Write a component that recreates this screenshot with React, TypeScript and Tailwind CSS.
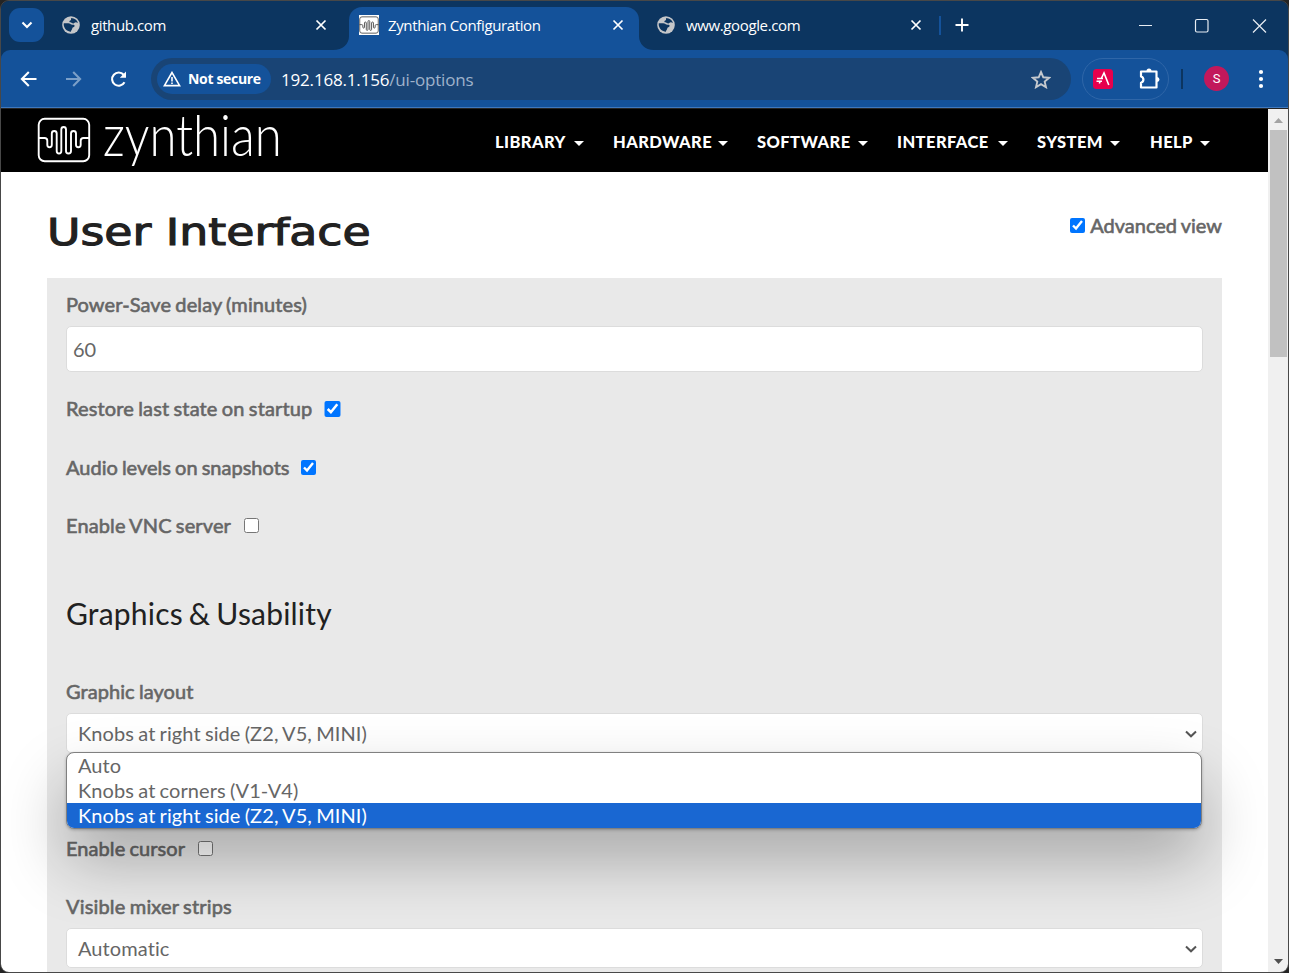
import React from "react";

function Globe() {
  return (
    <svg width="18" height="18" viewBox="0 0 18 18" className="shrink-0">
      <circle cx="9" cy="9" r="8.8" fill="#c4c6c9" />
      <path d="M1.8 7.3h4.600c1.600 0 2 1 3 1.300 1.200.4 2.300-.2 3 .7.6.8-.2 1.700-1.100 2-.9.3-1 .9-1.200 1.800-.3 1.100-1.100 1.200-1.100 2.600-3.900-.2-6.800-3-7.300-6.700z" fill="#0c3560" />
      <path d="M9.200 2c-.4 1 .2 1.500-.5 2.200-.5.6-1.300.5-1.300 1.300 0 .7.7.8 1.500.9 1 .1 1.100 1 2.300 1 1.300 0 1.500-1.200 2.500-1.200.9 0 1.700.5 2.300 1.100C15.200 4.100 12.700 2 9.200 2z" fill="#0c3560" />
    </svg>
  );
}

function Cross() {
  return (
    <svg width="12" height="12" viewBox="0 0 12 12" stroke="#fff" strokeWidth="1.7" className="shrink-0">
      <path d="M1.500 1.500l9 9M10.500 1.500l-9 9" />
    </svg>
  );
}

const WAVE =
  "M1 21h6.500q2.800 0 2.800 2.800v4a2.250 2.500 0 0 0 4.500 0V16.500a2.450 2.500 0 0 1 4.900 0V34a2.300 2.500 0 0 0 4.600 0V12.500a2.350 2.500 0 0 1 4.700 0V34a2.500 2.500 0 0 0 5 0V16.500a2.500 2.500 0 0 1 5 0v11.300a2.350 2.500 0 0 0 4.700 0v-4q0-2.800 2.800-2.800H53";

function Favicon() {
  return (
    <svg width="20" height="20" viewBox="0 0 54 54" className="shrink-0">
      <rect width="54" height="54" fill="#fff" />
      <rect x="2" y="5" width="50" height="44" rx="6" fill="none" stroke="#555" strokeWidth="2.500" />
      <path d={WAVE} transform="translate(0 5)" fill="none" stroke="#555" strokeWidth="2.600" />
    </svg>
  );
}

function TabStrip() {
  return (
    <div className="flex h-[49px] items-stretch bg-[#0c3560] text-[15px] text-white">
      <div className="ml-2 mt-[7px] flex h-[34px] w-[35px] items-center justify-center rounded-[11px] bg-[#14529a]">
        <svg width="12" height="8" viewBox="0 0 12 8" fill="none" stroke="#fff" strokeWidth="2.100"><path d="M1.500 1.500L6 6l4.500-4.500" /></svg>
      </div>
      <div className="ml-[18px] flex h-[48px] w-[265px] items-center">
        <Globe />
        <span className="ml-[11px] flex-1 tracking-[-0.4px]">github.com</span>
        <Cross />
      </div>
      <svg width="21" height="49" viewBox="0 0 21 49" className="ml-px shrink-0"><path d="M5 49C15 49 21 43 21 35V49z" fill="#14529a" /></svg>
      <div className="mt-[6px] flex h-[43px] w-[290px] items-start rounded-t-[13px] bg-[#14529a] pl-[10px] pr-[15px]">
        <div className="flex h-[36px] flex-1 items-center">
          <Favicon />
          <span className="ml-[9px] flex-1 whitespace-nowrap tracking-[-0.37px]">Zynthian Configuration</span>
          <Cross />
        </div>
      </div>
      <svg width="18" height="49" viewBox="0 0 18 49" className="shrink-0"><path d="M0 49V35c0 8 6 14 15 14z" fill="#14529a" /></svg>
      <div className="flex h-[48px] w-[265px] items-center">
        <Globe />
        <span className="ml-[11px] flex-1 tracking-[-0.37px]">www.google.com</span>
        <Cross />
      </div>
      <div className="ml-[17px] mt-[15px] h-[19px] w-[2px] bg-[#14529a]" />
      <svg width="14" height="14" viewBox="0 0 14 14" stroke="#fff" strokeWidth="1.900" className="ml-[13.500px] mt-[17px] shrink-0"><path d="M7 .5v13M.5 7h13" /></svg>
      <div className="flex-1" />
      <svg width="130" height="16" viewBox="0 0 130 16" fill="none" stroke="#e8edf3" strokeWidth="1.200" className="mr-[20px] mt-[17px] shrink-0">
        <path d="M1 7.500h13M115 1.500l13 13M128 1.500l-13 13" />
        <rect x="57.500" y="1.500" width="12.500" height="12.500" rx="1.500" />
      </svg>
    </div>
  );
}

function Toolbar() {
  return (
    <div className="bg-[#0c3560]">
      <div className="flex h-[58px] items-center rounded-t-[9px] bg-[#14529a] text-white">
        <svg width="110" height="18" viewBox="0 0 110 18" fill="none" strokeWidth="2.100" className="ml-[18px] shrink-0">
          <path d="M17.500 9H3.500M9.800 2L2.900 9l6.900 7" stroke="#fff" />
          <path d="M47 9h14M54.200 2l6.900 7-6.900 7" stroke="#7b9fc8" />
          <path d="M105.500 12.300a6.600 6.600 0 1 1-.8-7.500" stroke="#fff" />
          <path d="M107 1.500v6.300h-6.200z" fill="#fff" />
        </svg>
        <div className="ml-[22px] flex h-[42px] w-[920px] items-center rounded-full bg-[#194475] pl-[6px] pr-[20px]">
          <div className="flex h-[30px] w-[114px] items-center rounded-full bg-[#14529a] pl-[6px]">
            <svg width="18" height="16" viewBox="0 0 18 16" fill="none" stroke="#fff" strokeWidth="1.600"><path d="M9 1.500L1.400 14.600h15.200zM9 6v4.500M9 11.500v1.600" /></svg>
            <span className="mb-[2px] ml-[7px] whitespace-nowrap text-[14px] font-bold tracking-[-0.32px]">Not secure</span>
          </div>
          <span className="ml-[10px] mt-px text-[17px] tracking-[-0.18px]">192.168.1.156<span className="text-[#9fb2ca]">/ui-options</span></span>
          <div className="flex-1" />
          <svg width="20" height="19" viewBox="0 0 20 19" fill="none" stroke="#c5c9ce" strokeWidth="1.900"><path d="M10 2l2.300 5.300 5.800.5-4.400 3.800 1.300 5.600-5-3-5 3 1.300-5.600L1.900 7.800l5.800-.5z" /></svg>
        </div>
        <div className="ml-[11px] flex h-[42px] w-[87px] items-center rounded-full border border-[#2f66a8] pl-[10px]">
          <svg width="20" height="20" viewBox="0 0 20 20" fill="none" stroke="#fff" strokeWidth="1.600">
            <rect width="20" height="20" rx="3.500" fill="#e6004c" stroke="none" />
            <path d="M6.300 14.500l1.200-3M8.500 9l2.500-5L15.800 16M4 9.500h6M3.500 12.300h5.500" />
          </svg>
          <svg width="22" height="22" viewBox="0 0 22 22" fill="none" stroke="#fff" strokeWidth="2.200" strokeLinejoin="round" className="ml-[26px]">
            <path d="M2 3.500h15.500v16H2v-4.800a3.200 3.200 0 0 0 0-6.200z" />
            <path d="M7.500 3a2.500 2.500 0 0 1 5 0zM18 9a2.500 2.500 0 0 1 0 5z" fill="#fff" stroke="none" />
          </svg>
        </div>
        <div className="ml-[12px] h-[20px] w-[2px] bg-[#0c3560]" />
        <div className="mb-px ml-[21px] flex h-[25px] w-[25px] items-center justify-center rounded-full bg-[#c2185b] font-[Roboto] text-[13px]">S</div>
        <svg width="6" height="20" viewBox="0 0 6 20" fill="#fff" className="ml-[29px]"><circle cx="3" cy="3" r="2.100" /><circle cx="3" cy="10" r="2.100" /><circle cx="3" cy="17" r="2.100" /></svg>
      </div>
    </div>
  );
}

function NavItem({ label, width }: { label: string; width: string }) {
  return (
    <div className={`flex items-center justify-between ${width}`}>
      <span className="whitespace-nowrap">{label}</span>
      <svg width="10" height="5" viewBox="0 0 10 5" className="mt-[3px]"><path d="M0 0h10L5 5z" fill="#fff" /></svg>
    </div>
  );
}

function SiteNav() {
  return (
    <nav className="flex h-[63px] shrink-0 items-center bg-black pl-[36px] pr-[58px] font-[Lato] text-white">
      <svg width="54" height="46" viewBox="0 0 54 46" fill="none" stroke="#fff" strokeWidth="1.900" className="mb-px shrink-0">
        <rect x="1.700" y="1.800" width="50.500" height="42.500" rx="6" />
        <path d={WAVE} />
      </svg>
      <div className="mb-[13px] ml-[12px] origin-left scale-x-[0.848] whitespace-nowrap text-[58px] font-light leading-[74px]">zynthian</div>
      <div className="flex-1" />
      <div className="mt-[3px] flex gap-[29px] text-[16.500px] font-black tracking-[0.42px]">
        <NavItem label="LIBRARY" width="w-[89px]" />
        <NavItem label="HARDWARE" width="w-[115px]" />
        <NavItem label="SOFTWARE" width="w-[111px]" />
        <NavItem label="INTERFACE" width="w-[111px]" />
        <NavItem label="SYSTEM" width="w-[83px] mr-px" />
        <NavItem label="HELP" width="w-[60px]" />
      </div>
    </nav>
  );
}

const labelText = "whitespace-nowrap [word-spacing:-1px] [-webkit-text-stroke:0.6px_#666]";

function CheckRow({ label, checked, gap, box, tracking }: { label: string; checked?: boolean; gap: string; box: string; tracking: string }) {
  return (
    <label className={`flex h-[30px] items-center ${gap}`}>
      <span className={`${labelText} ${tracking}`}>{label}</span>
      <input type="checkbox" defaultChecked={checked} className={`m-0 ${box}`} />
    </label>
  );
}

function SelectBox({ value, children }: { value: string; children?: React.ReactNode }) {
  return (
    <div className="relative mt-[7px] flex h-[40px] items-center rounded-[5px] border border-[#dcdcdc] bg-white pl-[11px] pr-[5px] tracking-[0.085px] [word-spacing:-1px]">
      <span className="flex-1">{value}</span>
      <svg width="12" height="8" viewBox="0 0 12 8" fill="none" stroke="#555" strokeWidth="2" className="mt-px"><path d="M1 1.500L6 6.300l5-4.800" /></svg>
      {children}
    </div>
  );
}

function Page() {
  return (
    <main className="flex-1 bg-white px-[46px] font-[Lato] text-[20px] text-[#666]">
      <div className="flex h-[106px] justify-between">
        <h1 className="mt-[37px] w-[322px] origin-left scale-x-[1.204] whitespace-nowrap font-['DejaVu_Sans'] text-[38px] leading-[46px] text-[#212121] [-webkit-text-stroke:1.100px_#212121]">User Interface</h1>
        <label className="mt-[38px] flex h-[30px] items-center">
          <input type="checkbox" defaultChecked className="m-0 mr-[5px] h-[15px] w-[15px]" />
          <span className={labelText}>Advanced view</span>
        </label>
      </div>
      <section className="h-[700px] bg-[#e9e9e9] px-[19px] pt-[11px]">
        <div className={`h-[30px] leading-[30px] tracking-[0.1px] ${labelText}`}>Power-Save delay (minutes)</div>
        <div className="mt-[7px] flex h-[46px] items-center rounded-[5px] border border-[#dcdcdc] bg-white pl-[6px]">60</div>
        <CheckRow label="Restore last state on startup" checked gap="mt-[21px]" tracking="tracking-[0.14px]" box="ml-[12px] mt-px h-[16px] w-[17px]" />
        <CheckRow label="Audio levels on snapshots" checked gap="mt-[29px]" tracking="tracking-[0px]" box="ml-[12px] h-[15px] w-[15px]" />
        <CheckRow label="Enable VNC server" gap="mt-[28px]" tracking="tracking-[0.12px]" box="ml-[13px] h-[15px] w-[15px]" />
        <h2 className="mt-[53px] h-[40px] text-[30px] leading-[40px] tracking-[0.19px] text-[#212121] [word-spacing:-1.900px]">Graphics &amp; Usability</h2>
        <div className={`mt-[43px] h-[30px] leading-[30px] tracking-[0.07px] ${labelText}`}>Graphic layout</div>
        <SelectBox value="Knobs at right side (Z2, V5, MINI)">
          <div className="absolute -left-px top-[38px] z-10 w-[1136px] overflow-hidden rounded-[8px] border border-[#808080] bg-white leading-[25px] shadow-[0_1px_3px_rgba(0,0,0,0.25),0_32px_64px_rgba(0,0,0,0.28)]">
            <div className="h-[25px] pl-[11px]">Auto</div>
            <div className="h-[25px] pl-[11px]">Knobs at corners (V1-V4)</div>
            <div className="h-[25px] bg-[#1967d2] pl-[11px] text-white">Knobs at right side (Z2, V5, MINI)</div>
          </div>
        </SelectBox>
        <CheckRow label="Enable cursor" gap="mt-[80px]" tracking="tracking-[0.07px]" box="ml-[13px] h-[15px] w-[15px]" />
        <div className={`mt-[28px] h-[30px] leading-[30px] tracking-[0.17px] ${labelText}`}>Visible mixer strips</div>
        <SelectBox value="Automatic" />
      </section>
    </main>
  );
}

export default function App() {
  return (
    <div className="h-[973px] w-[1289px] overflow-hidden bg-[#242424] font-['Open_Sans',sans-serif]">
      <div className="flex h-[973px] w-[1289px] flex-col overflow-hidden rounded-[9px] border border-[#484848]">
        <TabStrip />
        <Toolbar />
        <div className="-mt-px h-px shrink-0 bg-[#3f78bd]" />
        <div className="mt-px flex h-[863px] shrink-0">
          <div className="flex h-[863px] w-[1267px] flex-col">
            <SiteNav />
            <Page />
          </div>
          <div className="flex w-[20px] flex-col items-center bg-[#f0f0f0]">
            <svg width="9" height="5" viewBox="0 0 9 5" className="mt-[9px]"><path d="M0 5h9L4.500 0z" fill="#a3a3a3" /></svg>
            <div className="mt-[7px] h-[227px] w-[17px] bg-[#c1c1c1]" />
            <div className="flex-1" />
            <svg width="9" height="5" viewBox="0 0 9 5" className="mb-[8px]"><path d="M0 0h9L4.500 5z" fill="#505050" /></svg>
          </div>
        </div>
      </div>
    </div>
  );
}
